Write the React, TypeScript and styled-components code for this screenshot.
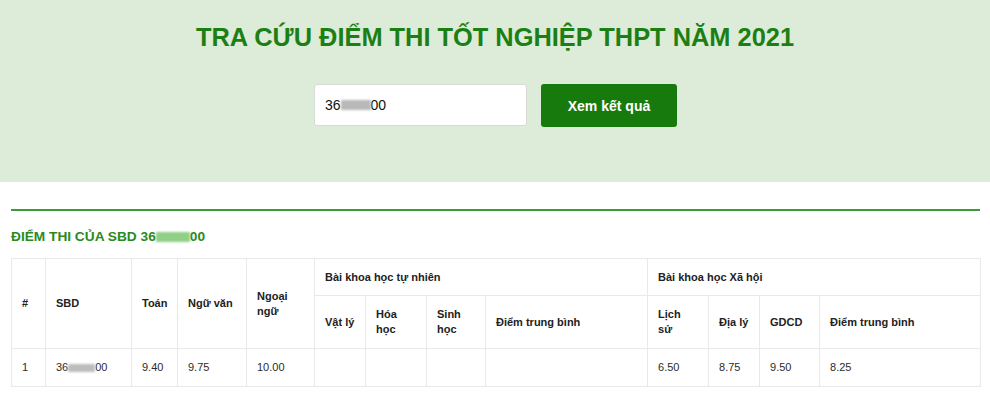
import React from "react";
import styled, { createGlobalStyle } from "styled-components";

const GlobalStyle = createGlobalStyle`
  html, body {
    margin: 0;
    padding: 0;
    background: #ffffff;
    font-family: "Liberation Sans", Arial, Helvetica, sans-serif;
    color: #222;
  }
`;

const Hero = styled.section`
  background: #ddebd9;
  padding: 23px 0 55px;
  display: flex;
  flex-direction: column;
  align-items: center;
`;

const Title = styled.h1`
  margin: 0;
  font-size: 25.4px;
  line-height: 29px;
  font-weight: 700;
  color: #1c7f13;
  text-align: center;
`;

const SearchRow = styled.div`
  margin-top: 32px;
  display: flex;
  align-items: flex-start;
  gap: 14px;
  padding-left: 1px;
`;

const Field = styled.div`
  box-sizing: border-box;
  width: 213px;
  height: 42px;
  background: #fff;
  border: 1px solid #d6dcd4;
  border-radius: 3px;
  padding: 0 10px;
  display: flex;
  align-items: center;
  font-size: 14px;
  color: #111;
`;

const Button = styled.button`
  box-sizing: border-box;
  width: 136px;
  height: 43px;
  border: none;
  border-radius: 3px;
  background: #167b0c;
  color: #fff;
  font-family: inherit;
  font-size: 14px;
  font-weight: 700;
  cursor: pointer;
`;

// blurred part of the candidate number
const Masked = styled.span<{ $w: number; $h: number; $tone: string }>`
  display: inline-block;
  width: ${(p) => p.$w}px;
  height: ${(p) => p.$h}px;
  background: ${(p) => p.$tone};
  filter: blur(1.2px);
  vertical-align: -1px;
`;

const Results = styled.section`
  padding: 27px 10px 0 11px;
`;

const Rule = styled.hr`
  margin: 0;
  border: none;
  height: 2px;
  background: #3d9b35;
`;

const SubTitle = styled.h2`
  margin: 18px 0 14px;
  font-size: 13.7px;
  line-height: 15px;
  font-weight: 700;
  color: #2a8a20;
  display: flex;
  align-items: center;
`;

const Table = styled.table`
  width: 969px;
  table-layout: fixed;
  border-collapse: collapse;
  font-size: 11px;
  line-height: 15px;
`;

const Th = styled.th<{ $h?: number }>`
  border: 1px solid #e9e9e9;
  text-align: left;
  vertical-align: middle;
  font-weight: 700;
  color: #222;
  padding: 0 6px 0 10px;
  height: ${(p) => (p.$h ? `${p.$h}px` : "auto")};
  white-space: nowrap;
`;

const Td = styled.td`
  border: 1px solid #e9e9e9;
  padding: 0 6px 0 10px;
  height: 37px;
  color: #2b2b2b;
  vertical-align: middle;
  white-space: nowrap;
`;

const widths = [34, 86, 46, 69, 68, 51, 61, 59, 162, 61, 51, 60, 161];

const Number = ({ tone, w, h }: { tone: string; w: number; h: number }) => (
  <>
    36
    <Masked $w={w} $h={h} $tone={tone} />
    00
  </>
);

const Lines = ({ text }: { text: string[] }) => (
  <>
    {text.map((t, i) => (
      <React.Fragment key={i}>
        {i > 0 && <br />}
        {t}
      </React.Fragment>
    ))}
  </>
);

export default function App() {
  const scores = ["9.40", "9.75", "10.00", "", "", "", "", "6.50", "8.75", "9.50", "8.25"];

  return (
    <>
      <GlobalStyle />
      <Hero>
        <Title>TRA CỨU ĐIỂM THI TỐT NGHIỆP THPT NĂM 2021</Title>
        <SearchRow>
          <Field>
            <Number tone="#b9b9b9" w={30} h={10} />
          </Field>
          <Button>Xem kết quả</Button>
        </SearchRow>
      </Hero>

      <Results>
        <Rule />
        <SubTitle>
          ĐIỂM THI CỦA SBD&nbsp;
          <Number tone="#8fcf86" w={34} h={10} />
        </SubTitle>

        <Table>
          <colgroup>
            {widths.map((w, i) => (
              <col key={i} style={{ width: w }} />
            ))}
          </colgroup>
          <thead>
            <tr>
              <Th rowSpan={2}>#</Th>
              <Th rowSpan={2}>SBD</Th>
              <Th rowSpan={2}>Toán</Th>
              <Th rowSpan={2}>Ngữ văn</Th>
              <Th rowSpan={2}>
                <Lines text={["Ngoại", "ngữ"]} />
              </Th>
              <Th colSpan={4} $h={36}>
                Bài khoa học tự nhiên
              </Th>
              <Th colSpan={4}>Bài khoa học Xã hội</Th>
            </tr>
            <tr>
              <Th $h={52}>Vật lý</Th>
              <Th>
                <Lines text={["Hóa", "học"]} />
              </Th>
              <Th>
                <Lines text={["Sinh", "học"]} />
              </Th>
              <Th>Điểm trung bình</Th>
              <Th>
                <Lines text={["Lịch", "sử"]} />
              </Th>
              <Th>Địa lý</Th>
              <Th>GDCD</Th>
              <Th>Điểm trung bình</Th>
            </tr>
          </thead>
          <tbody>
            <tr>
              <Td>1</Td>
              <Td>
                <Number tone="#bdbdbd" w={27} h={8} />
              </Td>
              {scores.map((s, i) => (
                <Td key={i}>{s}</Td>
              ))}
            </tr>
          </tbody>
        </Table>
      </Results>
    </>
  );
}
